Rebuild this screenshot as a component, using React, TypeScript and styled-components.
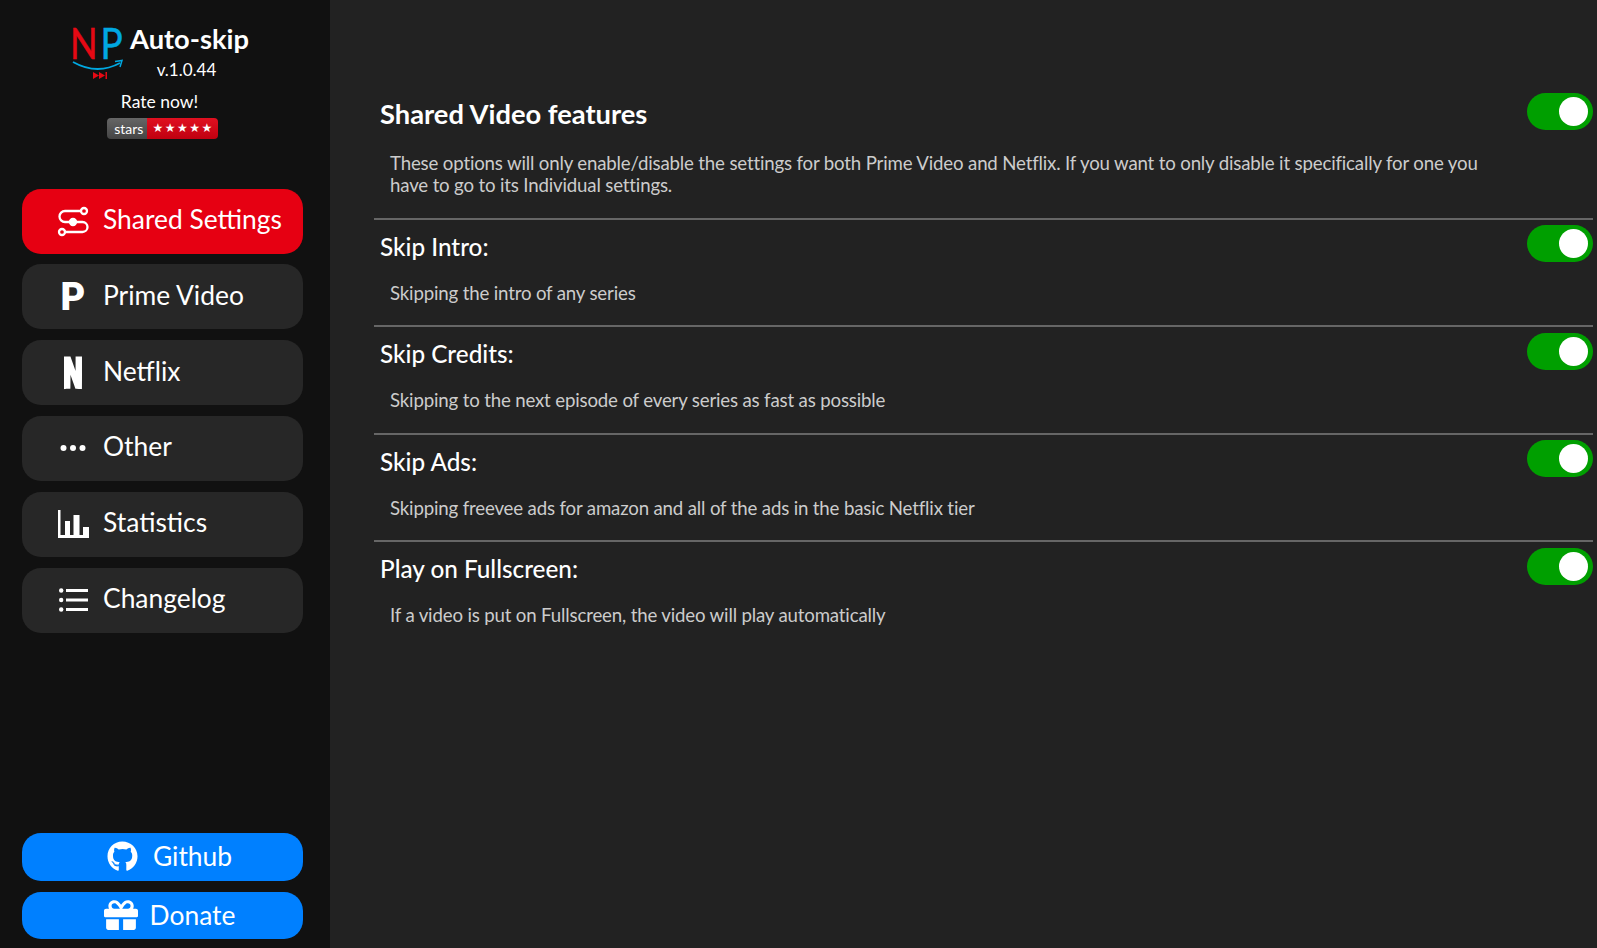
import React from 'react';

import styled, { createGlobalStyle } from 'styled-components';
import { FaGift, FaGithub } from 'react-icons/fa';
import { RiNetflixFill } from 'react-icons/ri';

const GlobalStyle = createGlobalStyle`
  html, body {
    margin: 0;
    padding: 0;
    height: 100%;
    background: #222222;
    font-family: Lato, "Open Sans", sans-serif;
  }
  #root {
    height: 100%;
  }
`;

const PrimeGlyph = styled.span`
  font-family: Roboto, sans-serif;
  font-size: 38px;
  font-weight: 900;
  line-height: 38px;
`;

const GiftIcon = styled(FaGift)`
  margin-right: -3px;
`;

const SharedIcon = () => (
  <svg width="32" height="32" viewBox="0 0 32 32" fill="none" stroke="#fff" strokeWidth="2.3">
    <path d="M24 6H8a5.5 5.5 0 0 0 0 11h17.500a5 5 0 0 1 0 10H8" />
    <circle cx="27" cy="6" r="3" />
    <circle cx="5" cy="27" r="3" />
    <circle cx="16" cy="17" r="3" fill="#fff" />
  </svg>
);

const DotsIcon = () => (
  <svg width="26" height="8" viewBox="0 0 26 8" fill="#fff">
    <circle cx="3.5" cy="4" r="3" />
    <circle cx="13" cy="4" r="3" />
    <circle cx="22.5" cy="4" r="3" />
  </svg>
);

const BarsIcon = () => (
  <svg width="31" height="28" viewBox="0 0 31 28" fill="#fff">
    <path d="M0 0h2.5v25H31v3H0z" />
    <path d="M7 11h5v14H7zM15.500 5h6v20h-6zM25 17h6v8h-6z" />
  </svg>
);

const ListIcon = () => (
  <svg width="29" height="24" viewBox="0 0 29 24" fill="#fff">
    <circle cx="2.200" cy="2.500" r="2.200" />
    <circle cx="2.200" cy="12" r="2.200" />
    <circle cx="2.200" cy="21.500" r="2.200" />
    <rect x="7" y="1" width="22" height="3" />
    <rect x="7" y="10.500" width="22" height="3" />
    <rect x="7" y="20" width="22" height="3" />
  </svg>
);

const Logo = () => (
  <svg width="52" height="59" viewBox="0 0 52 59" overflow="visible">
    <text transform="translate(-2 37) scale(.86 1)" fontFamily="Lato" fontSize="42" fill="#e50914" stroke="#e50914" strokeWidth=".5">N</text>
    <text transform="translate(28.500 37) scale(.88 1)" fontFamily="Lato" fontSize="42" fill="#00a8e1" stroke="#00a8e1" strokeWidth=".5">P</text>
    <path d="M1 40Q25 53.500 48 41" fill="none" stroke="#00a8e1" strokeWidth="1.800" />
    <path d="M43 39.500l7-1-2 6.500" fill="none" stroke="#00a8e1" strokeWidth="1.500" />
    <path d="M21 50l6 3.500-6 3.500zM27 50l6 3.500-6 3.500z" fill="#e50914" />
    <rect x="33.500" y="50" width="1.500" height="7" fill="#e50914" />
  </svg>
);

type NavEntry = { label: string; icon: React.ReactNode; active?: boolean };

const NAV_ENTRIES: NavEntry[] = [
  { label: 'Shared Settings', icon: <SharedIcon />, active: true },
  { label: 'Prime Video', icon: <PrimeGlyph>P</PrimeGlyph> },
  { label: 'Netflix', icon: <RiNetflixFill size={36} color="#fff" /> },
  { label: 'Other', icon: <DotsIcon /> },
  { label: 'Statistics', icon: <BarsIcon /> },
  { label: 'Changelog', icon: <ListIcon /> },
];

const SETTINGS = [
  {
    title: 'Skip Intro:',
    text: 'Skipping the intro of any series',
  },
  {
    title: 'Skip Credits:',
    text: 'Skipping to the next episode of every series as fast as possible',
  },
  {
    title: 'Skip Ads:',
    text: 'Skipping freevee ads for amazon and all of the ads in the basic Netflix tier',
  },
  {
    title: 'Play on Fullscreen:',
    text: 'If a video is put on Fullscreen, the video will play automatically',
  },
];

const App = (): JSX.Element => (
  <>
    <GlobalStyle />
    <Page>
      <Sidebar>
        <Brand>
          <Logo />
          <BrandText>
            <BrandName>Auto-skip</BrandName>
            <Version>v.1.0.44</Version>
          </BrandText>
        </Brand>
        <RateNow>Rate now!</RateNow>
        <Badge>
          <BadgeLabel>stars</BadgeLabel>
          <BadgeStars>★★★★★</BadgeStars>
        </Badge>
        <Nav>
          {NAV_ENTRIES.map(({ label, icon, active }) => (
            <NavButton key={label} $active={active}>
              <NavIcon>{icon}</NavIcon>
              <NavLabel>{label}</NavLabel>
            </NavButton>
          ))}
        </Nav>
        <Links>
          <LinkButton>
            <FaGithub size={31} />
            <LinkLabel>Github</LinkLabel>
          </LinkButton>
          <LinkButton>
            <GiftIcon size={34} />
            <LinkLabel>Donate</LinkLabel>
          </LinkButton>
        </Links>
      </Sidebar>
      <Main>
        <Section>
          <SectionHeader>
            <Heading>Shared Video features</Heading>
            <Toggle />
          </SectionHeader>
          <Description>
            These options will only enable/disable the settings for both Prime
            Video and Netflix. If you want to only disable it specifically for
            one you have to go to its Individual settings.
          </Description>
        </Section>
        {SETTINGS.map(({ title, text }) => (
          <Section key={title}>
            <SectionHeader>
              <SettingTitle>{title}</SettingTitle>
              <Toggle />
            </SectionHeader>
            <Description>{text}</Description>
          </Section>
        ))}
      </Main>
    </Page>
  </>
);

const Page = styled.div`
  box-sizing: border-box;
  display: flex;
  height: 948px;
  overflow: hidden;
`;

const Sidebar = styled.aside`
  align-items: center;
  background: #111111;
  box-sizing: border-box;
  color: #ffffff;
  display: flex;
  flex: 0 0 330px;
  flex-direction: column;
  padding: 22px 27px 9px 22px;
`;

const Brand = styled.div`
  align-self: flex-start;
  display: flex;
  margin-left: 50px;
`;

const BrandText = styled.div`
  align-items: center;
  display: flex;
  flex-direction: column;
  margin-left: 6px;
`;

const BrandName = styled.div`
  font-size: 27.3px;
  font-weight: 700;
  line-height: 34px;
`;

const Version = styled.div`
  font-size: 17px;
  line-height: 22px;
  margin-right: 6px;
  margin-top: 3px;
`;

const RateNow = styled.div`
  font-size: 17.5px;
  line-height: 22px;
  margin-right: 6px;
  margin-top: 10px;
`;

const Badge = styled.div`
  border-radius: 4px;
  display: flex;
  font-size: 14px;
  height: 21px;
  line-height: 21px;
  margin-top: 5px;
  overflow: hidden;
`;

const BadgeLabel = styled.span`
  background: linear-gradient(#666666, #444444);
  padding: 0 4px 0 7px;
`;

const BadgeStars = styled.span`
  background: linear-gradient(#e01020, #c00010);
  font-family: "DejaVu Sans", sans-serif;
  font-size: 12px;
  letter-spacing: 1.5px;
  padding: 0 4px 0 5px;
`;

const Nav = styled.nav`
  align-self: stretch;
  display: flex;
  flex: 1;
  flex-direction: column;
  gap: 10.8px;
  margin-top: 49.6px;
`;

const NavButton = styled.button<{ $active?: boolean }>`
  align-items: center;
  background: ${({ $active }) => ($active ? '#e60012' : '#272727')};
  border: none;
  border-radius: 19px;
  color: #ffffff;
  display: flex;
  flex: none;
  font-family: inherit;
  font-size: 26.4px;
  height: 65px;
  padding: 0 0 0 32px;
`;

const NavIcon = styled.span`
  align-items: center;
  display: flex;
  height: 40px;
  justify-content: center;
  margin-left: -1px;
  margin-right: 10px;
  width: 40px;
`;

const NavLabel = styled.span`
  margin-bottom: 4px;
`;

const Links = styled.div`
  align-self: stretch;
  display: flex;
  flex-direction: column;
  gap: 11px;
`;

const LinkButton = styled.button`
  align-items: center;
  background: #0080ff;
  border: none;
  border-radius: 19px;
  color: #ffffff;
  display: flex;
  font-family: inherit;
  font-size: 26.4px;
  gap: 15px;
  height: 47.5px;
  justify-content: center;
  padding: 0 0 0 14px;
`;

const LinkLabel = styled.span`
  margin-bottom: 1px;
`;

const Main = styled.main`
  background: #222222;
  box-sizing: border-box;
  flex: 1;
  padding: 93px 4px 0 44px;
`;

const Section = styled.section`
  border-bottom: 2px solid #666666;
  color: #ffffff;
  padding-bottom: 21.5px;
  padding-top: 5.5px;

  &:first-child {
    padding-top: 0;
  }

  &:last-child {
    border-bottom: none;
  }
`;

const SectionHeader = styled.div`
  align-items: flex-start;
  display: flex;
  justify-content: space-between;
  padding-left: 6px;
`;

const Heading = styled.h2`
  font-size: 27.3px;
  font-weight: 700;
  line-height: 34px;
  margin: 3.5px 0 2px;
`;

const SettingTitle = styled.h3`
  font-size: 24.3px;
  font-weight: 500;
  line-height: 30px;
  margin: 6.5px 0 0;
`;

const Description = styled.p`
  color: #cccccc;
  font-size: 18.67px;
  letter-spacing: -0.17px;
  line-height: 22px;
  margin: 19.5px 100px 0 16px;
`;

const Toggle = styled.div`
  background: #009f00;
  border-radius: 19px;
  flex: none;
  height: 37px;
  position: relative;
  width: 66px;

  &::after {
    background: #ffffff;
    border-radius: 50%;
    content: '';
    height: 29px;
    left: 32px;
    position: absolute;
    top: 4px;
    width: 29px;
  }
`;

export default App;
